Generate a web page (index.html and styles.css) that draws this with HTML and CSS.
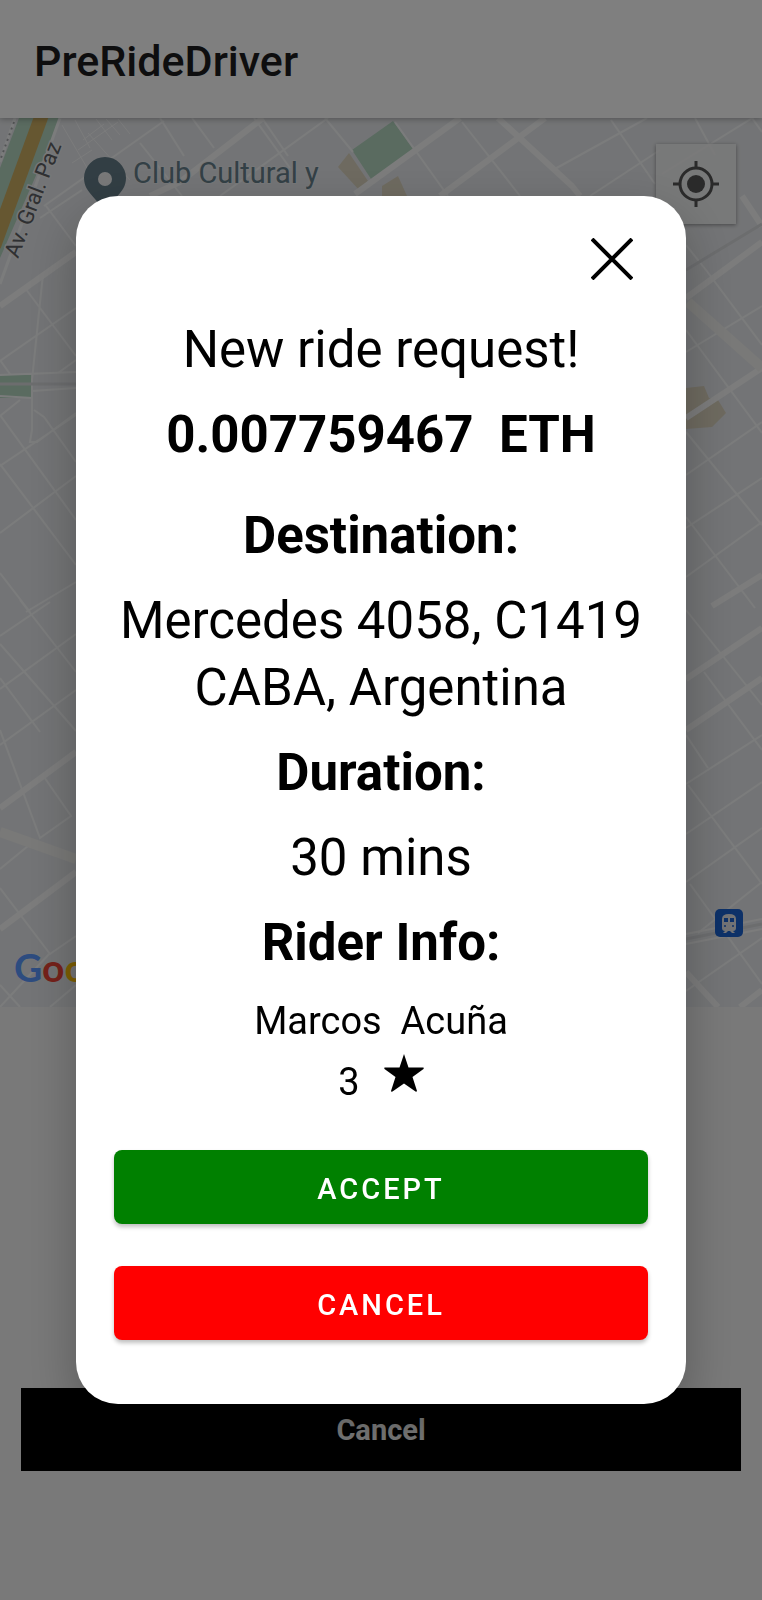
FILE: index.html
```html
<!DOCTYPE html>
<html lang="en">
<head>
<meta charset="utf-8">
<meta name="viewport" content="width=device-width, initial-scale=1">
<title>PreRideDriver</title>
<link rel="stylesheet" href="styles.css">
</head>
<body>
<div class="screen">
  <header class="app-bar"><h1 class="app-title">PreRideDriver</h1></header>
  <main class="content">
    <section class="map" aria-label="Map">
      <svg class="map-canvas" viewBox="0 118 762 889" preserveAspectRatio="xMidYMid slice">
        <rect y="118" width="762" height="889" fill="#e7e9ec"/>
        <!-- parks and plazas -->
        <g fill="#b4d6c0">
          <path d="M19 118H61L0 258V168z"/>
          <path d="M352 150L393 121L415 152L373 182z"/>
          <path d="M0 375H31L32 398H0z"/>
        </g>
        <g fill="#ddd5c0">
          <path d="M338 167L349 153L368 181L360 191z"/>
          <path d="M382 186L398 176L407 196H382z"/>
          <path d="M686 388L704 386L709 398L718 400L726 413L712 427L686 429z"/>
        </g>
        <!-- minor streets -->
        <g fill="none" stroke="#f7f8f9" stroke-width="2">
          <path d="M60 118L0 284M15 118L0 162" stroke-width="3"/>
          <path d="M62 125L100 190M75 120L90 148M88 133L130 180M83 140L104 124M78 150L118 122M72 163L92 150M96 119L112 140M106 119L120 135M118 119L130 134" stroke-width="1"/>
          <path d="M44 206L164 121M46 206L76 246M160 118L184 156M192 118L214 148M254 118L290 168M220 196L328 118M40 218L82 190M140 143L182 196M262 118L288 156M325 118L353 152"/>
          <path d="M462 122L520 196M395 122L448 196M553 170L647 118M590 196L660 150M611 120L655 184M662 174L762 112M695 118L715 155M752 118L762 132"/>
          <path d="M43 274L32 380V430L30 442H37L76 413M25 288L76 356M0 361L76 308M0 360L10 374M0 375L76 372M32 391L76 388M0 396L32 398M58 373L76 360M0 416L20 400M34 410L44 417L76 462M0 415L76 520M0 466L76 415"/>
          <path d="M0 533L76 476M0 464L76 565M0 573L30 612M26 612L76 582M0 636L50 602M20 600L76 672M0 689L76 634M0 644L76 731M0 745L76 690M0 678L40 732M0 730L40 838L71 816L42 774M0 869L28 846M0 888L50 954L76 936M0 1007L50 953M0 985L20 1007M50 1007L76 985"/>
          <path d="M686 245L706 270L762 345M686 352L762 306M686 330L762 433M686 475L762 422M686 528L762 478M686 432L762 525M686 577L762 522M686 517L755 608M686 610L762 705M704 672L762 750M686 784L762 735M686 834L762 782M686 735L708 768M688 785L762 884M686 882L762 828M690 884L762 984M698 933L762 882M686 991L762 938"/>
        </g>
        <!-- avenues -->
        <g fill="none" stroke="#f8f9f9" stroke-width="6">
          <path d="M0 306L76 252M263 118L180 182L150 196M460 118L355 194M545 118L440 196M498 118L572 186L580 196M686 298L762 242M742 196L762 226M686 418L762 368M686 679L762 628M686 730L762 678M0 808L76 752M0 929L76 872M712 606L762 575M686 972L718 1007M740 1007L762 990"/>
          <path d="M0 832L76 859M688 302L762 368" stroke="#f3f3f0" stroke-width="10"/>
          <path d="M686 270L762 224M0 384H76M686 939L762 924" stroke="#d8dadd" stroke-width="3"/>
          <path d="M686 934L762 919M686 944L762 929" stroke-width="2"/>
        </g>
        <path d="M43 112L-6 246" stroke="#cdae62" stroke-width="14"/>
        <path d="M14 122L1 158" stroke="#a5a8ab" stroke-width="2" stroke-dasharray="2 4"/>
        <text class="street-label" transform="translate(18 259) rotate(-69)">Av. Gral. Paz</text>
        <path d="M84 178a21 21 0 1 1 42 0c0 16-16 20-21 38c-5-18-21-22-21-38z" fill="#647c88"/>
        <circle cx="105" cy="179" r="7" fill="#f0f1f1"/>
        <text class="place-label" x="133" y="183">Club Cultural y</text>
        <rect x="715" y="909" width="28" height="28" rx="5" fill="#1a62d0"/>
        <path d="M722 919q0-5 7-5q7 0 7 5v9q0 3-3 3l2 2h-3l-2-2h-2l-2 2h-3l2-2q-3 0-3-3z" fill="#e4e7eb"/>
        <path d="M724 918h4v4h-4zM730 918h4v4h-4z" fill="#1a62d0"/>
        <circle cx="725" cy="926" r="1" fill="#1a62d0"/><circle cx="733" cy="926" r="1" fill="#1a62d0"/>
        <text class="map-brand" x="14" y="982"><tspan fill="#5b98ff">G</tspan><tspan fill="#ea4335">o</tspan><tspan fill="#fbbc05">o</tspan><tspan fill="#4285f4">g</tspan><tspan fill="#34a853">l</tspan><tspan fill="#ea4335">e</tspan></text>
      </svg>
      <button class="locate" type="button" aria-label="My location">
        <svg class="locate-icon" viewBox="0 0 46 46" fill="none" stroke="#555" stroke-width="3"><circle cx="23" cy="23" r="16"/><circle cx="23" cy="23" r="9" fill="#555" stroke="none"/><path d="M23 0V8M23 38V46M0 23H8M38 23H46"/></svg>
      </button>
    </section>
    <button class="cancel-search" type="button">Cancel</button>
  </main>
</div>
<div class="scrim">
  <section class="dialog" role="dialog" aria-modal="true" aria-labelledby="dialog-title">
    <button class="close" type="button" aria-label="Close">
      <svg class="close-icon" viewBox="0 0 42 42" stroke="#000" stroke-width="4"><path d="M1 1L41 41M41 1L1 41"/></svg>
    </button>
    <h2 class="line" id="dialog-title">New ride request!</h2>
    <p class="line strong price">0.007759467&nbsp; ETH</p>
    <h3 class="line strong">Destination:</h3>
    <p class="line">Mercedes 4058, C1419 CABA, Argentina</p>
    <h3 class="line strong">Duration:</h3>
    <p class="line">30 mins</p>
    <h3 class="line strong">Rider Info:</h3>
    <p class="rider">Marcos&nbsp; Acuña</p>
    <p class="rating">3
      <svg class="star" viewBox="0 0 40 38" role="img" aria-label="stars"><path d="M20 0L24.500 13.500H39.500Q40 14 39.500 15L28.500 23L33 37Q32.500 38 31.500 37.500L20 29.500L8.500 37.500Q7 38 7 37L11.500 23L.5 15Q0 14 .5 13.500H15.500z"/></svg>
    </p>
    <div class="actions">
      <button class="action accept" type="button">ACCEPT</button>
      <button class="action reject" type="button">CANCEL</button>
    </div>
  </section>
</div>
</body>
</html>
```

FILE: styles.css
```css
* { box-sizing: border-box; }

body {
  margin: 0;
  background: #f2f2f2;
  color: #000;
  font-family: Roboto, "Liberation Sans", sans-serif;
}

h1, h2, h3, p { margin: 0; }

button {
  border: 0;
  padding: 0;
  font-family: inherit;
  cursor: pointer;
}

.screen {
  display: flex;
  flex-direction: column;
  min-height: 100vh;
}

.app-bar {
  z-index: 1;
  display: flex;
  align-items: center;
  padding: 36px 34px 32px;
  background: #fff;
  box-shadow: 0 1px 6px rgba(0, 0, 0, 0.3);
}

.app-title {
  color: #1c1c1e;
  font-size: 43px;
  font-weight: 500;
  line-height: 50px;
}

.content {
  flex: 1;
  display: flex;
  flex-direction: column;
  justify-content: space-between;
}

.map {
  position: relative;
  height: 889px;
  overflow: hidden;
}

.map-canvas {
  display: block;
  width: 100%;
  height: 100%;
}

.street-label {
  fill: #5f6164;
  stroke: #eceef0;
  stroke-width: 3px;
  paint-order: stroke;
  font-size: 22px;
}

.place-label {
  fill: #67808c;
  stroke: #eceef0;
  stroke-width: 2px;
  paint-order: stroke;
  font-size: 29px;
}

.map-brand {
  font-family: Lato, sans-serif;
  font-size: 39px;
  font-weight: 700;
}

.locate {
  position: absolute;
  top: 26px;
  right: 26px;
  display: grid;
  place-items: center;
  width: 80px;
  height: 80px;
  background: rgba(244, 244, 244, 0.8);
  box-shadow: 0 1px 4px rgba(0, 0, 0, 0.4);
}

.locate-icon { width: 46px; }

.cancel-search {
  margin: 0 21px 129px;
  padding: 25px 24px 23px;
  background: #000;
  color: #f2f2f2;
  font-size: 29px;
  font-weight: 700;
  line-height: 35px;
}

.scrim {
  position: fixed;
  inset: 0;
  z-index: 2;
  display: grid;
  place-items: center;
  background: rgba(0, 0, 0, 0.5);
}

.dialog {
  display: flex;
  flex-direction: column;
  width: 80%;
  padding: 42px 38px 64px;
  border-radius: 42px;
  background: #fff;
  box-shadow: 0 20px 50px rgba(0, 0, 0, 0.25);
  text-align: center;
}

.close {
  align-self: flex-end;
  width: 42px;
  height: 42px;
  margin: 0 15px 36px;
  background: none;
}

.close-icon { display: block; }

.line {
  margin-bottom: 18px;
  font-size: 51px;
  font-weight: 400;
  line-height: 67px;
}

.strong { font-weight: 700; }

.price { margin-bottom: 34px; }

.rider {
  font-size: 38px;
  line-height: 54px;
}

.rating {
  display: flex;
  justify-content: center;
  gap: 24px;
  font-size: 38px;
  line-height: 68px;
}

.star {
  width: 40px;
  height: 38px;
  margin-top: 6px;
}

.actions {
  display: grid;
  gap: 42px;
  margin-top: 34px;
}

.action {
  padding: 22px 20px 18px;
  border-radius: 8px;
  box-shadow: 0 3px 4px rgba(0, 0, 0, 0.25);
  color: #fff;
  font-size: 29px;
  font-weight: 500;
  line-height: 34px;
  letter-spacing: 3px;
}

.accept { background: #008000; }

.reject { background: #f00; }
```
